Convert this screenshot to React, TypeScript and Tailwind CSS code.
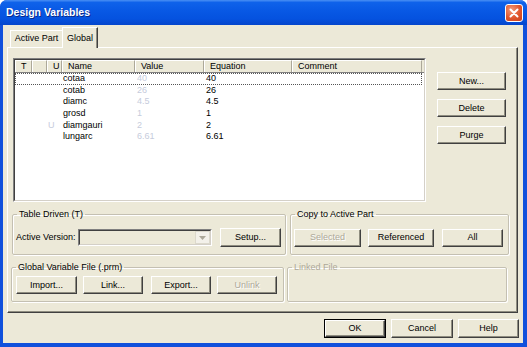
import React from "react";

type BtnProps = {
  label: string;
  className: string;
  disabled?: boolean;
  isDefault?: boolean;
};

function Btn({ label, className, disabled, isDefault }: BtnProps) {
  const face = (
    <div
      className={
        "h-full w-full flex items-center justify-center bg-[#ece9d8] border border-t-white border-l-white border-r-[#404040] border-b-[#404040] shadow-[inset_-1px_-1px_0_#8f8d80] leading-none " +
        (disabled ? "text-[#aca899] [text-shadow:1px_1px_0_#fff]" : "text-black")
      }
    >
      {label}
    </div>
  );
  if (isDefault) {
    return <div className={"border border-black shrink-0 " + className}>{face}</div>;
  }
  return <div className={"shrink-0 " + className}>{face}</div>;
}

function Group({
  legend,
  className,
  disabled,
  children,
}: {
  legend: string;
  className: string;
  disabled?: boolean;
  children?: React.ReactNode;
}) {
  return (
    <fieldset
      className={
        "border border-[#c4c0b2] rounded-[2px] px-[3px] shadow-[1px_1px_0_#fff,inset_1px_1px_0_#fff] " + className
      }
    >
      <legend
        className={
          "ml-[1px] px-[2px] leading-[11px] " + (disabled ? "text-[#aca899]" : "text-black")
        }
      >
        {legend}
      </legend>
      {children}
    </fieldset>
  );
}

const rows = [
  { u: "", name: "cotaa", value: "40", eq: "40" },
  { u: "", name: "cotab", value: "26", eq: "26" },
  { u: "", name: "diamc", value: "4.5", eq: "4.5" },
  { u: "", name: "grosd", value: "1", eq: "1" },
  { u: "U", name: "diamgauri", value: "2", eq: "2" },
  { u: "", name: "lungarc", value: "6.61", eq: "6.61" },
];

const headerCell =
  "h-full flex items-center pl-[5px] bg-[#ece9d8] border-t border-l border-t-white border-l-white border-r border-r-[#aca899] shrink-0";

function ListView() {
  return (
    <div className="w-[413px] h-[144px] border border-t-[#808080] border-l-[#808080] border-r-white border-b-white shrink-0">
      <div className="h-full border border-t-[#404040] border-l-[#404040] border-r-[#d4d0c8] border-b-[#d4d0c8] bg-white flex flex-col">
        <div className="flex h-[13px] border-b border-b-[#808080] bg-[#ece9d8] leading-none">
          <div className={headerCell + " w-[17px]"}>T</div>
          <div className={headerCell + " w-[15px]"}></div>
          <div className={headerCell + " w-[15px]"}>U</div>
          <div className={headerCell + " w-[73px]"}>Name</div>
          <div className={headerCell + " w-[69px]"}>Value</div>
          <div className={headerCell + " w-[88px]"}>Equation</div>
          <div className={headerCell + " w-[130px]"}>Comment</div>
        </div>
        <div className="flex flex-col">
          {rows.map((r, i) => (
            <div
              key={r.name}
              className={
                "flex items-center h-[11.6px] w-[407px] leading-none " +
                (i === 0 ? "border border-dotted border-[#555]" : "border border-transparent")
              }
            >
              <div className="w-[16px] shrink-0"></div>
              <div className="w-[15px] shrink-0"></div>
              <div className="w-[15px] shrink-0 pl-[1px] text-[#c6ccdc]">{r.u}</div>
              <div className="w-[73px] shrink-0 pl-[1px]">{r.name}</div>
              <div className="w-[69px] shrink-0 pl-[2px] text-[#c6ccdc]">{r.value}</div>
              <div className="w-[88px] shrink-0 pl-[2px]">{r.eq}</div>
              <div className="flex-1"></div>
            </div>
          ))}
        </div>
      </div>
    </div>
  );
}

function ComboDisabled() {
  return (
    <div className="w-[134px] h-[17px] border border-t-[#808080] border-l-[#808080] border-r-white border-b-white shrink-0">
      <div className="h-full border border-t-[#404040] border-l-[#404040] border-r-[#d4d0c8] border-b-[#d4d0c8] bg-[#ece9d8] flex justify-end">
        <div className="w-[15px] h-full flex items-center justify-center bg-[#f3f1ea] border border-[#dcd9cc]">
          <svg width="7" height="4" viewBox="0 0 7 4">
            <path d="M0 0 L7 0 L3.5 4 Z" fill="#aca899" />
          </svg>
        </div>
      </div>
    </div>
  );
}

export default function App() {
  return (
    <div className="w-[527px] h-[347px] bg-white font-['Liberation_Sans',Arial,sans-serif] text-[9px] text-black select-none">
      <div className="w-full h-full flex flex-col rounded-t-[7px] overflow-hidden bg-[#0b47d3]">
        {/* title bar */}
        <div className="h-[25px] shrink-0 flex items-center pl-[6px] pr-[4px] bg-[linear-gradient(to_bottom,#4a90f4_0%,#0f62ea_10%,#0858e4_45%,#0552df_75%,#0446cc_100%)]">
          <div className="flex-1 text-white font-bold text-[10.5px] font-['Liberation_Sans',Arial,sans-serif] [text-shadow:1px_1px_0_#0a2a8a]">
            Design Variables
          </div>
          <div className="w-[18px] h-[18px] rounded-[3px] border border-white bg-[radial-gradient(circle_at_35%_30%,#f59a7a_0%,#e0552c_55%,#c8401c_100%)] flex items-center justify-center">
            <svg width="10" height="10" viewBox="0 0 10 10">
              <path d="M1.5 1.5 L8.5 8.5 M8.5 1.5 L1.5 8.5" stroke="#fff" strokeWidth="2" strokeLinecap="round" />
            </svg>
          </div>
        </div>

        {/* body */}
        <div className="flex-1 flex flex-col bg-[#ece9d8] border-l-[3px] border-r-[4px] border-b-[4px] border-[#1050dc]">
          {/* tab strip */}
          <div className="h-[22px] shrink-0 flex items-end pl-[7px]">
            <div className="w-[52px] h-[17px] flex items-center justify-center border-t border-l border-t-white border-l-white">
              Active Part
            </div>
            <div className="relative z-10 -mb-[1px] w-[36px] h-[21px] flex items-start pt-[4px] justify-center bg-[#ece9d8] border-t border-l border-r border-t-white border-l-white border-r-[#404040] shadow-[inset_-1px_0_0_#8f8d80]">
              Global
            </div>
          </div>

          {/* tab panel */}
          <div className="ml-[4px] w-[511px] h-[266px] shrink-0 border border-t-white border-l-white border-r-[#404040] border-b-[#404040] shadow-[inset_-1px_-1px_0_#8f8d80] flex flex-col">
            <div className="flex pt-[10px] pl-[5px]">
              <ListView />
              <div className="ml-[11px] pt-[14px] flex flex-col gap-[9px]">
                <Btn label="New..." className="w-[69px] h-[18px]" />
                <Btn label="Delete" className="w-[69px] h-[18px]" />
                <Btn label="Purge" className="w-[69px] h-[18px]" />
              </div>
            </div>

            <div className="flex items-start mt-[7px] pl-[4px] gap-[4px]">
              <Group legend="Table Driven (T)" className="w-[274px] pb-[7px]">
                <div className="flex items-center h-[19px] mt-[8px]">
                  <span className="w-[62px] shrink-0">Active Version:</span>
                  <ComboDisabled />
                  <Btn label="Setup..." className="ml-[8px] w-[61px] h-[19px]" />
                </div>
              </Group>
              <Group legend="Copy to Active Part" className="w-[219px] pb-[7px]">
                <div className="flex items-center h-[19px] mt-[8px]">
                  <Btn label="Selected" disabled className="w-[67px] h-[18px]" />
                  <Btn label="Referenced" className="ml-[7px] w-[66px] h-[18px]" />
                  <Btn label="All" className="ml-[8px] w-[61px] h-[18px]" />
                </div>
              </Group>
            </div>

            <div className="flex items-start mt-[7px] pl-[3px] gap-[3px]">
              <Group legend="Global Variable File (.prm)" className="w-[273px] pb-[7px]">
                <div className="flex items-center h-[18px] mt-[3px] pl-[1px]">
                  <Btn label="Import..." className="w-[61px] h-[18px]" />
                  <Btn label="Link..." className="ml-[6px] w-[60px] h-[18px]" />
                  <Btn label="Export..." className="ml-[8px] w-[60px] h-[18px]" />
                  <Btn label="Unlink" disabled className="ml-[6px] w-[60px] h-[18px]" />
                </div>
              </Group>
              <Group legend="Linked File" disabled className="w-[220px] pb-[7px]">
                <div className="h-[18px] mt-[3px]"></div>
              </Group>
            </div>
          </div>

          {/* dialog buttons */}
          <div className="flex justify-end gap-[5px] mt-[6px] pr-[4px]">
            <Btn label="OK" isDefault className="w-[62px] h-[19px]" />
            <Btn label="Cancel" className="w-[62px] h-[19px]" />
            <Btn label="Help" className="w-[61px] h-[19px]" />
          </div>
        </div>
      </div>
    </div>
  );
}
